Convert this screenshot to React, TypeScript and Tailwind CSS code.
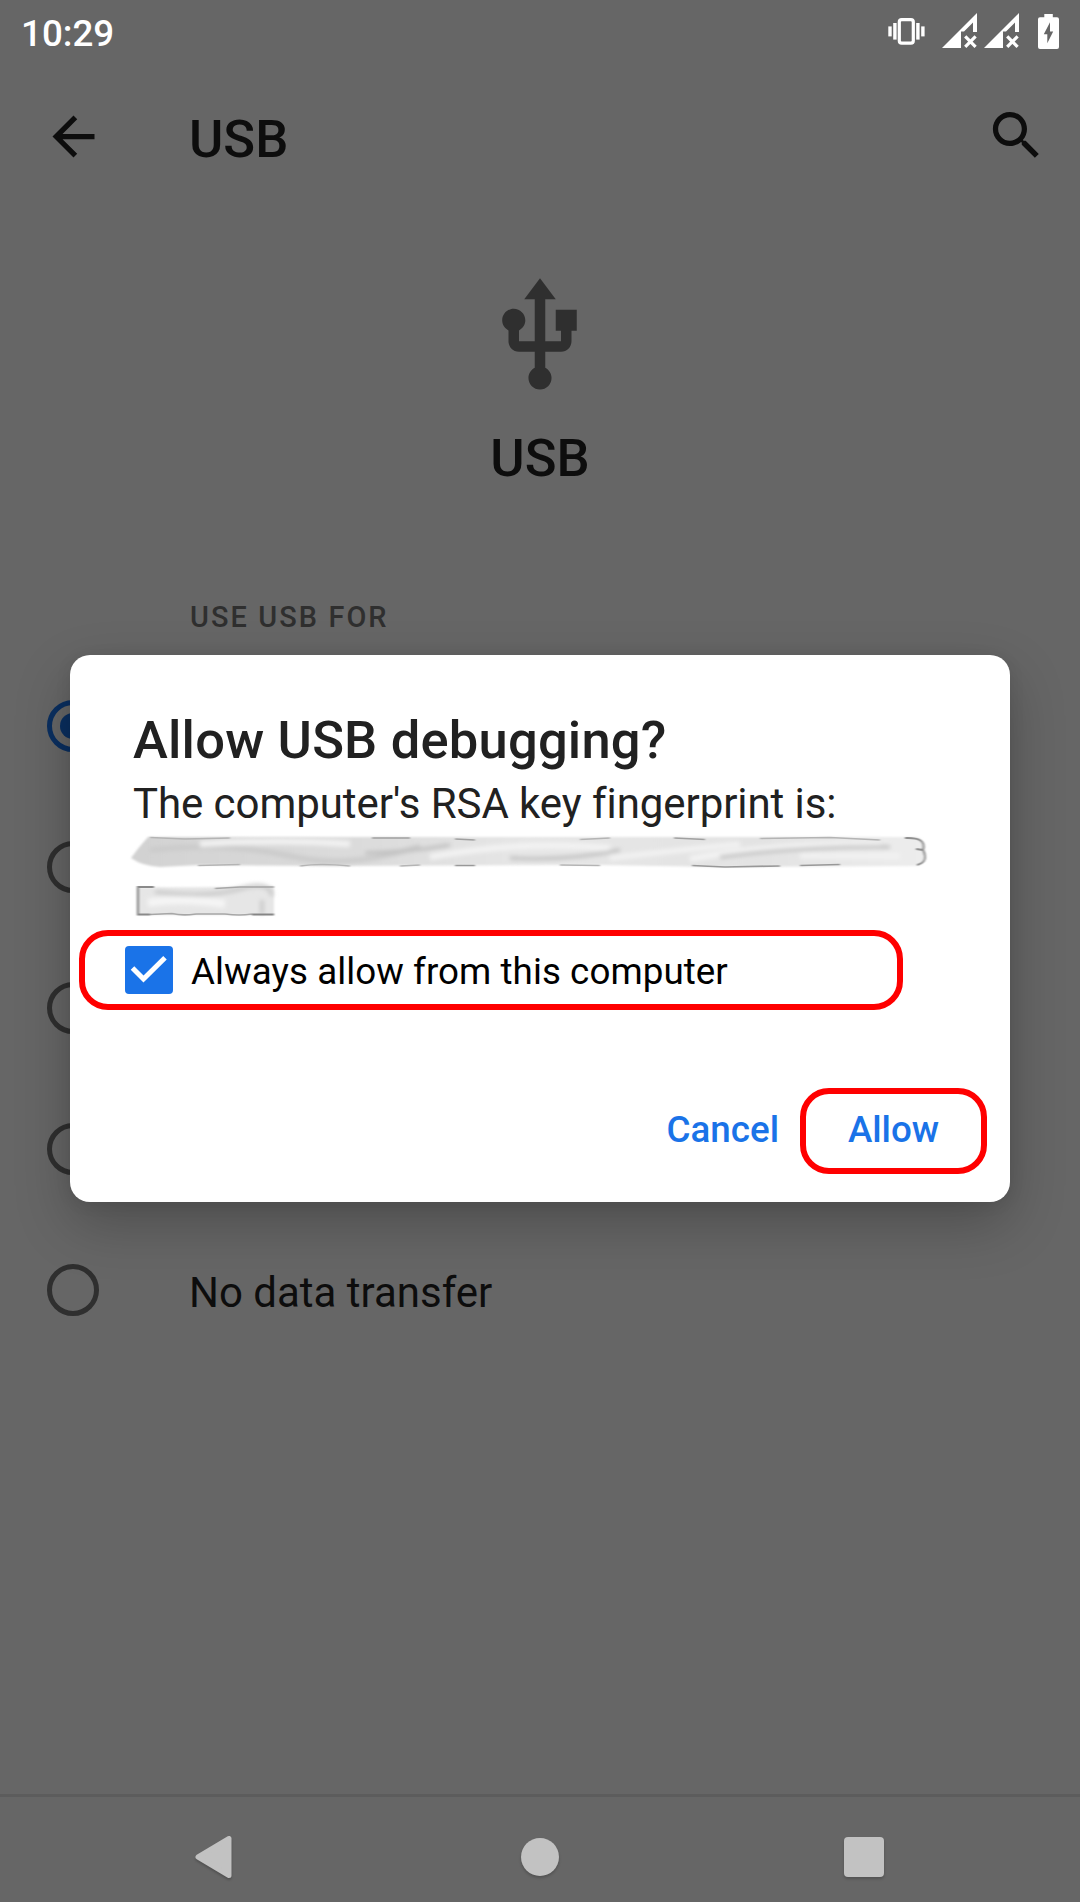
import type { ReactNode } from "react";

function VibrateIcon() {
  return (
    <svg className="h-[30px] w-[38px]" viewBox="887 16 38 30" fill="#fff">
      <rect x="899.3" y="19.6" width="14" height="23.6" rx="2.4" fill="none" stroke="#fff" strokeWidth="3.2" />
      <rect x="893.2" y="23" width="3.4" height="16.6" />
      <rect x="888.3" y="26.4" width="3.4" height="10" />
      <rect x="916.2" y="23" width="3.4" height="16.6" />
      <rect x="921.2" y="26.4" width="3.4" height="10" />
    </svg>
  );
}

function SignalIcon() {
  return (
    <svg className="h-[36px] w-[36px]" viewBox="942 13 36 36" fill="#fff">
      <path d="M942 48L977 13V32H973V22.5L964 31.5H961V48Z" />
      <path d="M965.2 36.4L975.6 46.8M975.6 36.4L965.2 46.8" stroke="#fff" strokeWidth="3.2" />
    </svg>
  );
}

function BatteryIcon() {
  return (
    <svg className="h-[36px] w-[21px]" viewBox="1038 14 21 36">
      <path
        fill="#fff"
        fillRule="evenodd"
        d="M1044.3 14H1052.8V17.3H1057Q1059 17.3 1059 19.3V47Q1059 49 1057 49H1040Q1038 49 1038 47V19.3Q1038 17.3 1040 17.3H1044.3ZM1050 22.3L1043.8 34.3H1047.3V43.3L1053.2 31.6H1050Z"
      />
    </svg>
  );
}

function MaterialIcon({ d, className }: { d: string; className: string }) {
  return (
    <svg className={className} viewBox="0 0 24 24" fill="currentColor">
      <path d={d} />
    </svg>
  );
}

function Radio({ checked }: { checked: boolean }) {
  return (
    <span
      className={
        checked
          ? "flex size-[52px] items-center justify-center rounded-full border-[5px] border-[#0a2f60]"
          : "flex size-[52px] rounded-full border-[5px] border-[#2f2f2f]"
      }
    >
      {checked && <span className="size-[26px] rounded-full bg-[#0a2f60]" />}
    </span>
  );
}

function Option({ checked = false, children }: { checked?: boolean; children?: ReactNode }) {
  return (
    <li className="flex h-[141px] items-center pl-[47px]">
      <Radio checked={checked} />
      <span className="mt-[7px] ml-[90px] text-[42px] leading-[50px] text-[#0d0d0d]">{children}</span>
    </li>
  );
}

/* Smeared strokes that hide the key fingerprint. */
function Redaction() {
  return (
    <svg className="block h-[92px] w-[820px]" viewBox="124 830 820 92" fill="none">
      <defs>
        <filter id="soft" x="-5%" y="-30%" width="110%" height="160%">
          <feGaussianBlur stdDeviation="2.2" />
        </filter>
        <filter id="edge" x="-5%" y="-30%" width="110%" height="160%">
          <feGaussianBlur stdDeviation="1" />
        </filter>
        <filter id="fine" x="-5%" y="-30%" width="110%" height="160%">
          <feGaussianBlur stdDeviation="1.3 0.7" />
        </filter>
        <linearGradient id="smear" x1="130" x2="926" y1="0" y2="0" gradientUnits="userSpaceOnUse">
          <stop offset="0" stopColor="#d2d2d2" />
          <stop offset="0.3" stopColor="#dcdcdc" />
          <stop offset="0.5" stopColor="#e6e6e6" />
          <stop offset="0.8" stopColor="#e3e3e3" />
          <stop offset="1" stopColor="#ededed" />
        </linearGradient>
      </defs>
      <path filter="url(#edge)" fill="url(#smear)" d="M148 837H915Q926 838 925 851Q926 866 915 866L720 867L600 865L330 866L200 865L160 867Q142 866 131 858Q138 848 148 837Z" />
      <g filter="url(#soft)">
        <path stroke="#cacaca" strokeWidth="5" d="M150 850Q230 842 290 856T420 846" />
        <path stroke="#f3f3f3" strokeWidth="6" d="M200 844Q280 839 350 844M430 857Q520 840 610 848M690 859Q780 842 880 846" />
        <path stroke="#bdbdbd" strokeWidth="3" d="M365 853Q410 852 450 845M510 858Q570 861 620 850M720 857Q800 846 890 847" />
        <path stroke="#f3f3f3" strokeWidth="5" d="M610 858Q680 850 740 844M800 856L900 856" />
      </g>
      <g filter="url(#fine)">
        <path stroke="#a0a0a0" strokeWidth="1.7" d="M372 838H410M674 838L705 839.5M455 839L475 840" />
        <path stroke="#b4b4b4" strokeWidth="1.5" d="M150 837.5L185 839L230 838M580 839.5L610 838M760 838.5L830 837.5L880 840" />
        <path stroke="#b4b4b4" strokeWidth="1.6" d="M198 865.5L240 864.5M300 866Q320 863 350 866M400 866L420 865M560 865L600 865.5" />
        <path stroke="#989898" strokeWidth="1.7" d="M455 865.5H475M692 865.5L725 867L780 866M800 865.5L840 864.5" />
        <path stroke="#8e8e8e" strokeWidth="2" d="M905 838Q927 837 923 850Q929 862 917 865M916 849L923 850" />
      </g>
      <path filter="url(#edge)" fill="#e6e6e6" d="M137 887.5L235 887L274 886V915H137Z" />
      <g filter="url(#soft)">
        <path stroke="#cbcbcb" strokeWidth="4" d="M155 892Q210 898 240 889T272 896M262 900V914" />
        <path stroke="#f5f5f5" strokeWidth="8" d="M148 903Q180 897 225 904" />
      </g>
      <g filter="url(#fine)">
        <path stroke="#8a8a8a" strokeWidth="2.2" d="M154 887H138V914.5H150" />
        <path stroke="#a6a6a6" strokeWidth="1.6" d="M215 888.5L240 887H274M150 914.5L172 913.5Q182 916 196 914H225Q240 916 252 914" />
        <path stroke="#858585" strokeWidth="2" d="M252 914.5H274" />
      </g>
    </svg>
  );
}

function DebuggingDialog() {
  return (
    <div
      role="dialog"
      className="absolute top-[655px] left-[70px] flex h-[547px] w-[940px] flex-col rounded-[20px] bg-white pt-[54px] text-[#212121] shadow-[0_22px_56px_rgba(0,0,0,0.24),0_2px_16px_rgba(0,0,0,0.08)]"
    >
      <h2 className="pl-[63px] text-[52.5px] leading-[62px] font-medium tracking-[0.2px]">Allow USB debugging?</h2>
      <p className="mt-[8px] pl-[63px] text-[42px] leading-[50px] tracking-[-0.07px]">
        The computer's RSA key fingerprint is:
      </p>
      <div className="mt-px pl-[54px]">
        <Redaction />
      </div>
      <label className="mt-[8px] ml-[9px] flex h-[80px] w-[824px] items-center rounded-[29px] border-[6px] border-[#ff0000] pl-[40px]">
        <span className="flex size-[48px] items-center justify-center rounded-[4px] bg-[#1a73e8]">
          <svg className="size-[48px]" viewBox="0 0 48 48" fill="none">
            <path d="M7.5 22L18.5 33L40 11.8" stroke="#fff" strokeWidth="5" />
          </svg>
        </span>
        <span className="mt-[3px] ml-[18px] text-[36.75px] leading-[44px] tracking-[0.06px] text-black">
          Always allow from this computer
        </span>
      </label>
      <div className="mt-[78px] mr-[23px] flex items-center justify-end text-[36.75px] leading-[44px] font-medium text-[#1a73e8]">
        <button className="mr-[21px] -mt-[3px]">Cancel</button>
        <button className="flex h-[86px] w-[187px] items-center justify-center rounded-[29px] border-[6px] border-[#ff0000] pb-[3px]">
          Allow
        </button>
      </div>
    </div>
  );
}

export default function App() {
  return (
    <div className="relative flex h-[1902px] w-[1080px] flex-col overflow-hidden bg-[#666666] font-['Roboto',sans-serif]">
      <div className="flex h-[63px] items-start pr-[21px] pl-[21px] text-white">
        <span className="mt-[12px] text-[36.75px] leading-[44px] font-medium">10:29</span>
        <div className="ml-auto flex items-start">
          <div className="mt-[16px]"><VibrateIcon /></div>
          <div className="mt-[13px] ml-[17px] flex gap-[6px]">
            <SignalIcon />
            <SignalIcon />
          </div>
          <div className="mt-[14px] ml-[18px]"><BatteryIcon /></div>
        </div>
      </div>

      <header className="flex h-[147px] items-center pr-[32px] pl-[42px] text-[#0d0d0d]">
        <MaterialIcon className="size-[63px]" d="M20 11H7.83l5.59-5.59L12 4l-8 8 8 8 1.41-1.41L7.83 13H20v-2z" />
        <h1 className="mt-[5px] ml-[84px] text-[52.5px] leading-[62px] font-medium">USB</h1>
        <MaterialIcon
          className="mb-[2px] ml-auto size-[63px]"
          d="M15.5 14h-.79l-.28-.27C15.41 12.59 16 11.11 16 9.5 16 5.91 13.09 3 9.5 3S3 5.91 3 9.5 5.91 16 9.5 16c1.61 0 3.09-.59 4.23-1.57l.27.28v.79l5 4.99L20.49 19l-4.99-5zm-6 0C7.01 14 5 11.99 5 9.5S7.01 5 9.5 5 14 7.01 14 9.5 11.99 14 9.5 14z"
        />
      </header>

      <section className="mt-[63px] flex flex-col items-center">
        <MaterialIcon
          className="size-[126px] text-[#2f2f2f]"
          d="M15 7v4h1v2h-3V5h2l-3-4-3 4h2v8H8v-2.07c.7-.37 1.2-1.08 1.2-1.93 0-1.21-.99-2.2-2.2-2.2-1.21 0-2.2.99-2.2 2.2 0 .85.5 1.56 1.2 1.93V13c0 1.11.89 2 2 2h3v3.05c-.71.37-1.2 1.1-1.2 1.95 0 1.22.99 2.2 2.2 2.2 1.21 0 2.2-.98 2.2-2.2 0-.85-.49-1.58-1.2-1.95V15h3c1.11 0 2-.89 2-2v-2h1V7h-4z"
        />
        <h2 className="mt-[28px] text-[52.5px] leading-[62px] font-medium text-[#0d0d0d]">USB</h2>
      </section>

      <h3 className="mt-[111px] pl-[190px] text-[28.875px] leading-[34px] font-medium tracking-[2.1px] text-[#2f2f2f]">USE USB FOR</h3>
      <ul className="mt-[21px]">
        <Option checked />
        <Option />
        <Option />
        <Option />
        <Option>No data transfer</Option>
      </ul>

      <nav className="mt-auto flex h-[108px] items-center border-t-[3px] border-[#5c5c5c] pt-[14px] pl-[194px]">
        <svg className="h-[44px] w-[40px] drop-shadow-[0_2px_1px_rgba(0,0,0,0.2)]" viewBox="0 0 40 44">
          <path d="M4 22L35 3.5V40.5Z" fill="#c2c2c2" stroke="#c2c2c2" strokeWidth="5" strokeLinejoin="round" />
        </svg>
        <span className="ml-[287px] size-[38px] rounded-full bg-[#c2c2c2] shadow-[0_2px_3px_rgba(0,0,0,0.2)]" />
        <span className="ml-[285px] size-[40px] rounded-[4px] bg-[#c2c2c2] shadow-[0_2px_3px_rgba(0,0,0,0.2)]" />
      </nav>

      <DebuggingDialog />
    </div>
  );
}
